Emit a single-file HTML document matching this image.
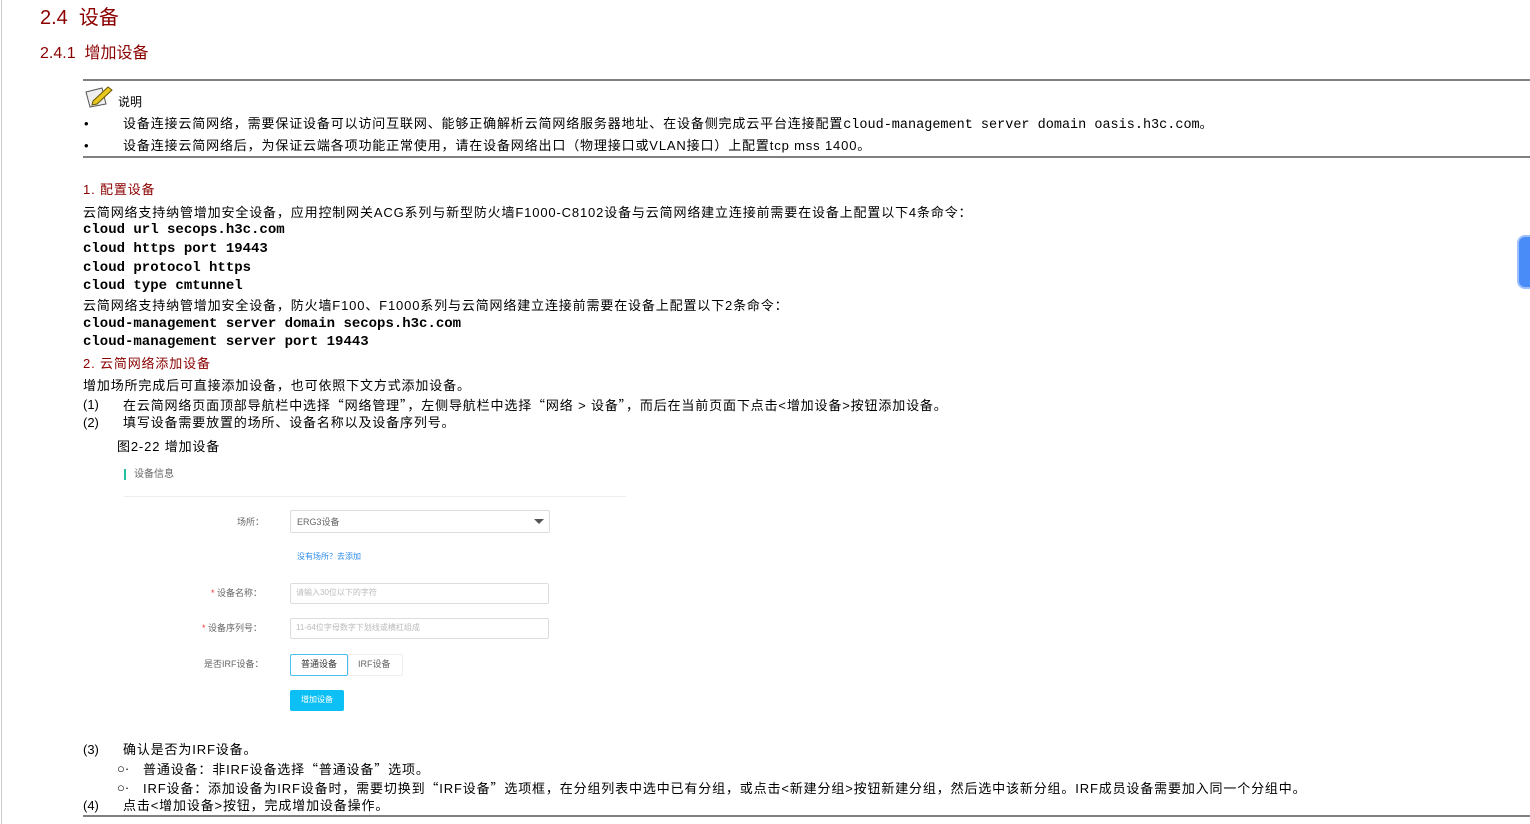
<!DOCTYPE html>
<html><head><meta charset="utf-8"><style>
body{margin:0;width:1530px;height:824px;background:#fff;position:relative;overflow:hidden;font-family:"Liberation Sans","Noto Sans CJK SC",sans-serif;font-size:13px;color:#000}
.a{position:absolute;white-space:nowrap;line-height:1}
.t{letter-spacing:0.85px}
.q{font-family:"Noto Sans CJK SC",sans-serif}
.r{color:#8b0000}
.m{font-family:"Liberation Mono",monospace;font-weight:bold;font-size:14px;letter-spacing:0}
.hr{position:absolute;left:83px;right:0;height:2px;background:#808080}
.g{color:#666;font-size:9px}
.box{position:absolute;border:1px solid #ddd;border-radius:2px;background:#fff}
</style></head><body>
<div style="position:absolute;left:1px;top:0;width:1px;height:824px;background:#ccc"></div>
<div class="a r" style="left:40px;top:8px;font-size:20px">2.4&nbsp; 设备</div>
<div class="a r" style="left:40px;top:46px;font-size:16px">2.4.1&nbsp; 增加设备</div>
<div class="hr" style="top:79px"></div>
<svg style="position:absolute;left:84px;top:85px" width="30" height="24" viewBox="0 0 30 24"><path d="M2 7 L18 3 L22 19 L6 22 Z" fill="#eee" stroke="#555"/><path d="M9 16 L24 2 L28 5 L13 19 L8 20 Z" fill="#e8c820" stroke="#665500"/></svg>
<div class="a" style="left:118px;top:96px;font-size:12px">说明</div>
<div class="a" style="left:84px;top:117px">•</div>
<div class="a t" style="left:123px;top:117px">设备连接云简网络，需要保证设备可以访问互联网、能够正确解析云简网络服务器地址、在设备侧完成云平台连接配置<span class="m" style="font-weight:normal;font-size:13.5px">cloud-management server domain oasis.h3c.com</span>。</div>
<div class="a" style="left:84px;top:139px">•</div>
<div class="a t" style="left:123px;top:139px">设备连接云简网络后，为保证云端各项功能正常使用，请在设备网络出口（物理接口或VLAN接口）上配置tcp mss 1400。</div>
<div class="hr" style="top:156px"></div>
<div class="a r t" style="left:83px;top:183px">1. 配置设备</div>
<div class="a t" style="left:83px;top:206px">云简网络支持纳管增加安全设备，应用控制网关ACG系列与新型防火墙F1000-C8102设备与云简网络建立连接前需要在设备上配置以下4条命令：</div>
<div class="a m" style="left:83px;top:223px">cloud url secops.h3c.com</div>
<div class="a m" style="left:83px;top:242px">cloud https port 19443</div>
<div class="a m" style="left:83px;top:261px">cloud protocol https</div>
<div class="a m" style="left:83px;top:279px">cloud type cmtunnel</div>
<div class="a t" style="left:83px;top:299px">云简网络支持纳管增加安全设备，防火墙F100、F1000系列与云简网络建立连接前需要在设备上配置以下2条命令：</div>
<div class="a m" style="left:83px;top:317px">cloud-management server domain secops.h3c.com</div>
<div class="a m" style="left:83px;top:335px">cloud-management server port 19443</div>
<div class="a r t" style="left:83px;top:357px">2. 云简网络添加设备</div>
<div class="a t" style="left:83px;top:379px">增加场所完成后可直接添加设备，也可依照下文方式添加设备。</div>
<div class="a" style="left:83px;top:398px">(1)</div><div class="a t" style="left:123px;top:398px">在云简网络页面顶部导航栏中选择<span class="q">“</span>网络管理<span class="q">”</span>，左侧导航栏中选择<span class="q">“</span>网络 &gt; 设备<span class="q">”</span>，而后在当前页面下点击&lt;增加设备&gt;按钮添加设备。</div>
<div class="a" style="left:83px;top:416px">(2)</div><div class="a t" style="left:123px;top:416px">填写设备需要放置的场所、设备名称以及设备序列号。</div>
<div class="a t" style="left:117px;top:440px">图2-22 增加设备</div>
<div style="position:absolute;left:124px;top:469px;width:2px;height:11px;background:#20c0a0"></div>
<div class="a g" style="left:134px;top:470px;font-size:10px">设备信息</div>
<div style="position:absolute;left:124px;top:496px;width:502px;height:1px;background:#eee"></div>
<div class="a g" style="left:237px;top:518px">场所：</div>
<div class="box" style="left:290px;top:510px;width:258px;height:21px"></div>
<div class="a g" style="left:297px;top:518px">ERG3设备</div>
<div style="position:absolute;left:534px;top:519px;border-left:5px solid transparent;border-right:5px solid transparent;border-top:5px solid #555"></div>
<div class="a" style="left:297px;top:553px;font-size:8px;color:#2a8be8">没有场所？去添加</div>
<div class="a g" style="left:211px;top:589px"><span style="color:#e33">*</span> 设备名称：</div>
<div class="box" style="left:290px;top:583px;width:257px;height:19px"></div>
<div class="a" style="left:296px;top:589px;font-size:8px;color:#bbb">请输入30位以下的字符</div>
<div class="a g" style="left:202px;top:624px"><span style="color:#e33">*</span> 设备序列号：</div>
<div class="box" style="left:290px;top:618px;width:257px;height:19px"></div>
<div class="a" style="left:296px;top:624px;font-size:8px;color:#bbb">11-64位字母数字下划线或横杠组成</div>
<div class="a g" style="left:204px;top:660px">是否IRF设备：</div>
<div class="box" style="left:290px;top:654px;width:56px;height:20px;border-color:#4ac0f0"></div>
<div class="a g" style="left:301px;top:660px;color:#333">普通设备</div>
<div class="box" style="left:348px;top:654px;width:53px;height:20px;border-color:#eee"></div>
<div class="a g" style="left:358px;top:660px">IRF设备</div>
<div style="position:absolute;left:290px;top:690px;width:54px;height:21px;background:#0cc0f5;border-radius:2px"></div>
<div class="a" style="left:301px;top:696px;font-size:8px;color:#fff">增加设备</div>
<div class="a" style="left:83px;top:743px">(3)</div><div class="a t" style="left:123px;top:743px">确认是否为IRF设备。</div>
<div class="a" style="left:117px;top:762px">○·</div><div class="a t" style="left:143px;top:762px">普通设备：非IRF设备选择<span class="q">“</span>普通设备<span class="q">”</span>选项。</div>
<div class="a" style="left:117px;top:781px">○·</div><div class="a t" style="left:143px;top:781px">IRF设备：添加设备为IRF设备时，需要切换到<span class="q">“</span>IRF设备<span class="q">”</span>选项框，在分组列表中选中已有分组，或点击&lt;新建分组&gt;按钮新建分组，然后选中该新分组。IRF成员设备需要加入同一个分组中。</div>
<div class="a" style="left:83px;top:799px">(4)</div><div class="a t" style="left:123px;top:799px">点击&lt;增加设备&gt;按钮，完成增加设备操作。</div>
<div class="hr" style="top:815px"></div>
<div style="position:absolute;left:1517px;top:235px;width:20px;height:50px;background:#4a8cf7;border-radius:8px 0 0 8px;border:2px solid #9cc0ff"></div>
</body></html>
